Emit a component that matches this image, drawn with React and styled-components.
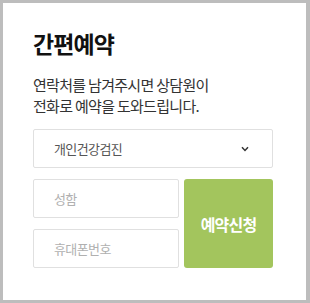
import React from 'react';
import styled, { createGlobalStyle } from 'styled-components';

const GlobalStyle = createGlobalStyle`
  html, body {
    margin: 0;
    padding: 0;
    background: #bdbdbd;
  }
  body {
    font-family: 'Noto Sans CJK KR', 'Noto Sans', sans-serif;
  }
`;

const Frame = styled.div`
  box-sizing: border-box;
  width: 303px;
  height: 297px;
  margin: 3px 4px 3px 3px;
  background: #ffffff;
  padding: 25px 30px 0 30px;
`;

const Title = styled.h2`
  margin: 0;
  font-size: 23px;
  line-height: 30px;
  font-weight: 700;
  letter-spacing: -0.9px;
  color: #111;
`;

const Desc = styled.p`
  margin: 16px 0 0 0;
  font-size: 15px;
  line-height: 21px;
  letter-spacing: -0.7px;
  color: #333;
`;

const Form = styled.div`
  margin-top: 13px;
  width: 240px;
  display: grid;
  grid-template-columns: 146px 89px;
  grid-template-rows: 39px 39px 39px;
  column-gap: 5px;
  row-gap: 11px;
`;

const Field = styled.div`
  box-sizing: border-box;
  border: 1px solid #e0e0e0;
  border-radius: 2px;
  display: flex;
  align-items: center;
  justify-content: space-between;
  padding: 0 20px;
  font-size: 13px;
  letter-spacing: -0.6px;
  color: ${({ $muted }) => ($muted ? '#b0b0b0' : '#555')};
  grid-column: ${({ $wide }) => ($wide ? '1 / 3' : 'auto')};
`;

const Chevron = styled.svg`
  width: 8px;
  height: 6px;
  margin-right: 3px;
`;

const Submit = styled.button`
  grid-column: 2;
  grid-row: 2 / 4;
  border: none;
  border-radius: 3px;
  background: #a3c55d;
  color: #fff;
  font-family: inherit;
  font-size: 16px;
  font-weight: 600;
  letter-spacing: -0.8px;
  padding: 0;
`;

export default function App() {
  return (
    <>
      <GlobalStyle />
      <Frame>
        <Title>간편예약</Title>
        <Desc>
          연락처를 남겨주시면 상담원이
          <br />
          전화로 예약을 도와드립니다.
        </Desc>
        <Form>
          <Field $wide>
            개인건강검진
            <Chevron viewBox="0 0 8 6">
              <path d="M1 1.2 L4 4.4 L7 1.2" fill="none" stroke="#333" strokeWidth="1.5" />
            </Chevron>
          </Field>
          <Field $muted>성함</Field>
          <Submit>예약신청</Submit>
          <Field $muted>휴대폰번호</Field>
        </Form>
      </Frame>
    </>
  );
}
